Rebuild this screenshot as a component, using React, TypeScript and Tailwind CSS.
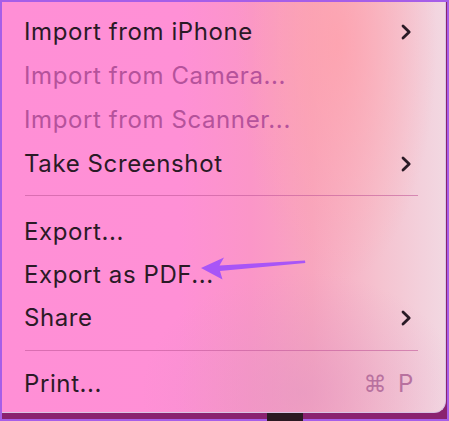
import React from "react";

const Chevron = () => (
  <svg width="12" height="16" viewBox="0 0 12 16" className="shrink-0">
    <polyline points="3,2 9.2,8 3,14" fill="none" stroke="#2a1a26" strokeWidth="2.8" strokeLinecap="round" strokeLinejoin="round" />
  </svg>
);

type RowProps = { label: string; disabled?: boolean; sub?: boolean; shortcut?: boolean; h?: string };

const Row = ({ label, disabled, sub, shortcut, h = "h-[44px]" }: RowProps) => (
  <div className={`flex items-center justify-between pl-[22px] pr-[33px] ${h}`}>
    <span className={disabled ? "text-[#b5529b]" : "text-[#2a1a26]"}>{label}</span>
    {sub && <Chevron />}
    {shortcut && (
      <span className="text-[#b8719f] flex items-center gap-[11px] -mr-[2px]">
        <span className="font-['DejaVu_Sans',sans-serif] text-[23px]">⌘</span>
        <span>P</span>
      </span>
    )}
  </div>
);

const Sep = ({ cls }: { cls: string }) => (
  <div className={`ml-[23px] mr-[27px] h-px bg-[#c2589a]/60 ${cls}`} />
);

export default function App() {
  return (
    <div className="w-[449px] h-[421px] bg-[#a65ee8] p-[2px] overflow-hidden">
      <div className="w-full h-full bg-[#8a2270] relative">
        <div className="relative h-[411px] w-[444px] rounded-br-[12px] border-r border-b border-[#d9c4e4] bg-[linear-gradient(90deg,#ff8fd6_0%,#ff90d6_40%,#fb96c8_56%,#f8a6bf_70%,#f5c2cf_85%,#f2d8e2_100%)] overflow-hidden">
          <div className="absolute inset-0 bg-[radial-gradient(ellipse_100px_240px_at_335px_40px,rgba(255,160,170,0.75),rgba(255,160,170,0)_100%)]" />
          <div className="absolute inset-0 bg-[radial-gradient(ellipse_160px_120px_at_300px_390px,rgba(225,150,195,0.55),rgba(225,150,195,0)_100%)]" />
          <div className="relative pt-[8px] font-['Inter',sans-serif] text-[24px] tracking-[0.6px]">
            <Row label="Import from iPhone" sub />
            <Row label="Import from Camera..." disabled />
            <Row label="Import from Scanner..." disabled />
            <Row label="Take Screenshot" sub />
            <Sep cls="mt-[9px] mb-[14px]" />
            <Row label="Export..." h="h-[43px]" />
            <Row label="Export as PDF..." h="h-[43px]" />
            <Row label="Share" sub h="h-[43px]" />
            <Sep cls="mt-[11px] mb-[11px]" />
            <Row label="Print..." shortcut />
          </div>
          <svg className="absolute left-0 top-0" width="444" height="411" viewBox="2 2 444 411">
            <path d="M201,268 L224,257.5 L219.5,265.5 L305,260.5 L305.3,263 L220,271 L222.5,279.5 Z" fill="#a855f7" />
          </svg>
        </div>
        <div className="absolute left-[265px] top-[411px] w-[36px] h-[8px] bg-[#2b1a22]" />
      </div>
    </div>
  );
}
